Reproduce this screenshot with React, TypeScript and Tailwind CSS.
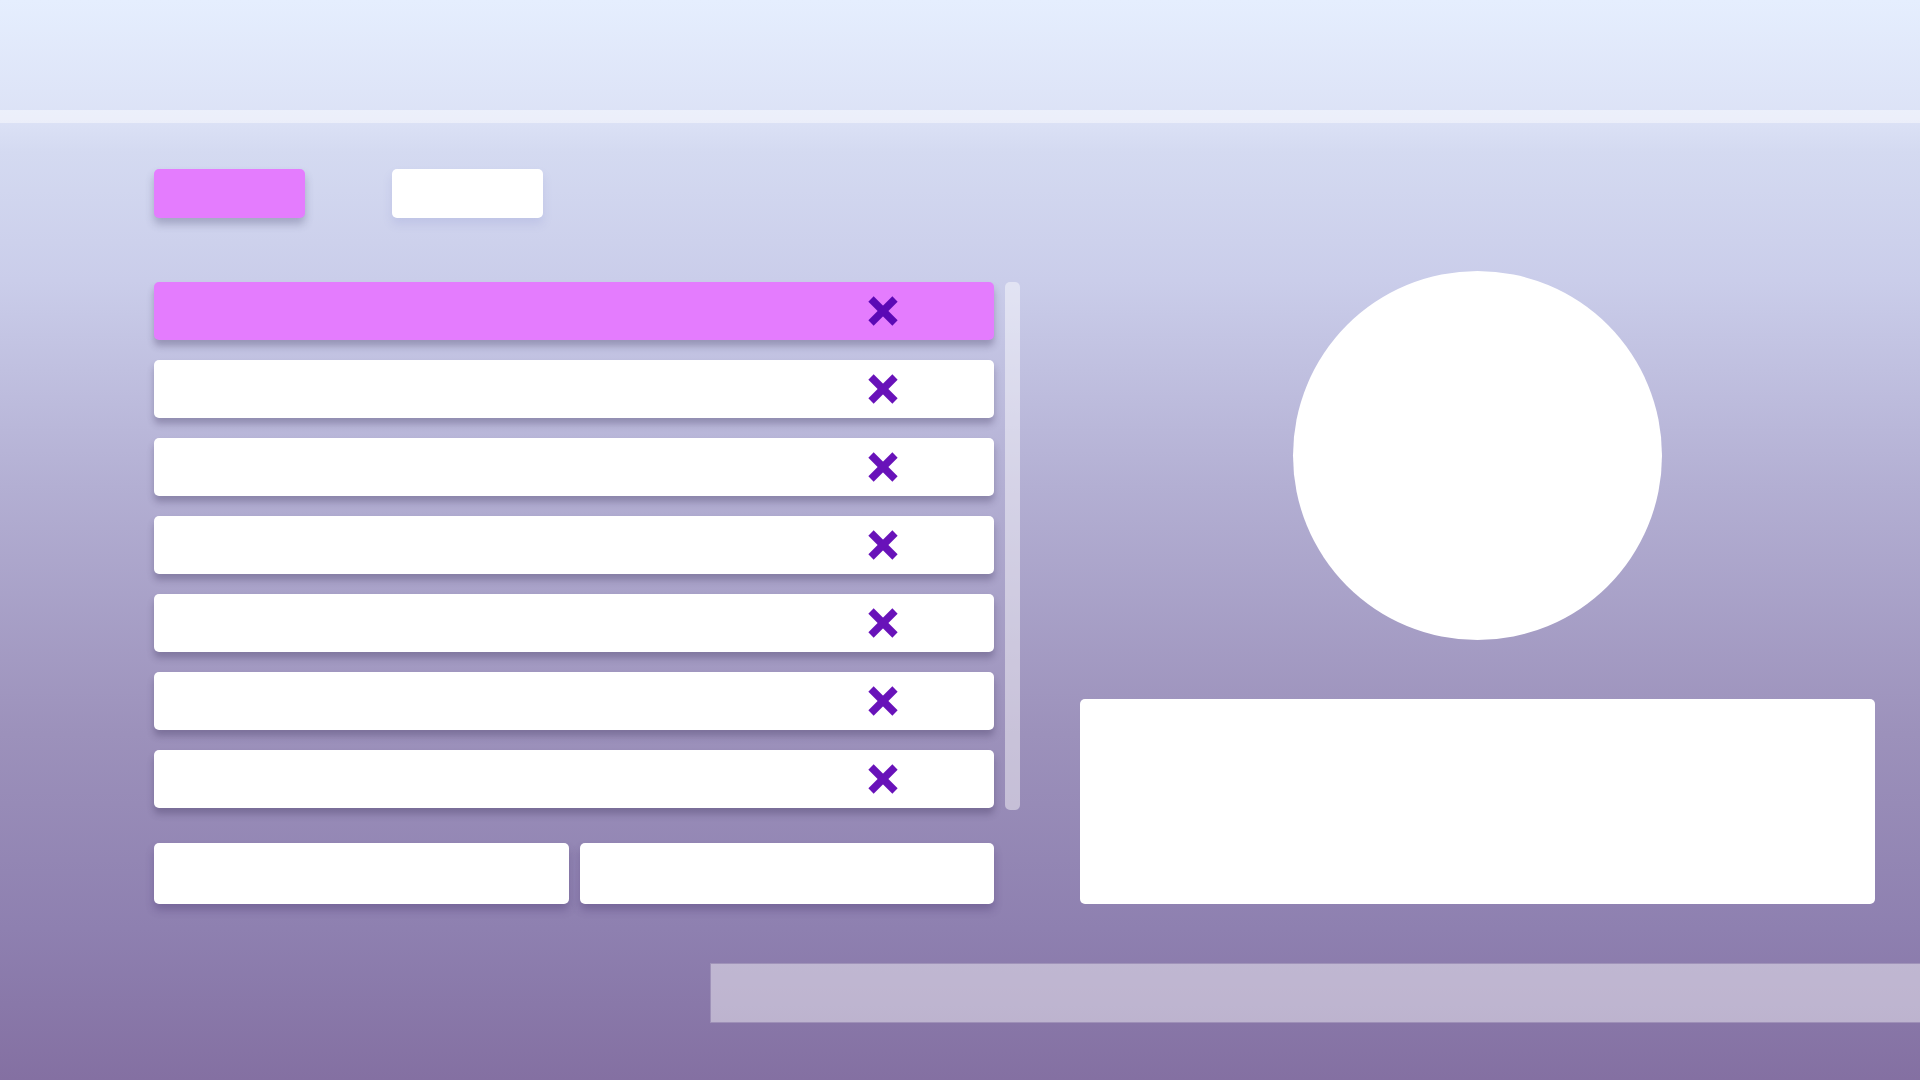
import React from "react";

function XIcon({ color }: { color: string }) {
  return (
    <svg width="32" height="32" viewBox="0 0 32 32" aria-hidden="true">
      <line x1="4" y1="4" x2="28" y2="28" stroke={color} strokeWidth="7.5" strokeLinecap="butt" />
      <line x1="28" y1="4" x2="4" y2="28" stroke={color} strokeWidth="7.5" strokeLinecap="butt" />
    </svg>
  );
}

const rows = [0, 1, 2, 3, 4, 5, 6];

export default function App() {
  return (
    <div
      className="w-full h-[1080px] overflow-hidden flex flex-col bg-[linear-gradient(180deg,#e5eefe_0%,#dce2f6_11%,#d4daf1_14%,#cacdea_26%,#b3afd3_45%,#9c91bb_68%,#8e80b0_86%,#8470a2_100%)]"
      style={{ fontFamily: "Inter, 'Noto Sans', sans-serif" }}
    >
      <div className="h-[110px] shrink-0" />
      <div className="h-[13px] shrink-0 bg-white/45" />

      <div className="pl-[154px] pt-[46px] flex gap-[87px] shrink-0">
        <button className="w-[151px] h-[49px] rounded-[5px] bg-[#e47cfe] shadow-[0_6px_8px_rgba(60,60,100,0.3)]" />
        <button className="w-[151px] h-[49px] rounded-[5px] bg-white shadow-[0_6px_10px_rgba(120,130,200,0.18)]" />
      </div>

      <div className="flex items-start pl-[154px] mt-[53px] gap-[60px] shrink-0">
        <div className="flex flex-col pt-[11px] w-[866px]">
          <div className="flex gap-[11px]">
            <div className="w-[840px] flex flex-col gap-[20px]">
              {rows.map((i) => (
                <div
                  key={i}
                  className={
                    i === 0
                      ? "h-[58px] rounded-[5px] bg-[#e47cfe] shadow-[0_6px_7px_rgba(50,40,80,0.3)] flex items-center justify-end pr-[95px]"
                      : "h-[58px] rounded-[5px] bg-white shadow-[0_6px_7px_rgba(50,40,80,0.3)] flex items-center justify-end pr-[95px]"
                  }
                >
                  <XIcon color={i === 0 ? "#5b09b5" : "#6812b9"} />
                </div>
              ))}
            </div>
            <div className="w-[15px] h-[528px] rounded-[5px] bg-white/45" />
          </div>
          <div className="flex gap-[11px] mt-[33px] w-[840px]">
            <button className="flex-1 h-[61px] rounded-[5px] bg-white shadow-[0_6px_8px_rgba(60,40,100,0.3)]" />
            <button className="flex-1 h-[61px] rounded-[5px] bg-white shadow-[0_6px_8px_rgba(60,40,100,0.3)]" />
          </div>
        </div>

        <div className="w-[795px] flex flex-col items-center">
          <div className="w-[369px] h-[369px] rounded-full bg-white" />
          <div className="mt-[59px] w-full h-[205px] rounded-[5px] bg-white" />
        </div>
      </div>

      <div className="ml-[710px] mt-[59px] h-[60px] shrink-0 bg-white/45 border border-[rgba(100,80,140,0.35)] border-r-0" />
    </div>
  );
}
